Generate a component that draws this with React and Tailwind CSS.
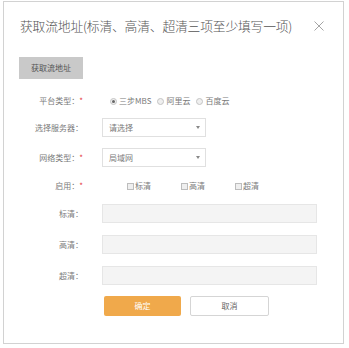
import React, { useState } from 'react';

const font = { fontFamily: '"Noto Sans CJK SC", "Noto Sans", sans-serif' };

function Radio({ checked, label, onClick }) {
  return (
    <label className="flex items-center cursor-pointer" onClick={onClick}>
      <span className="w-[7px] h-[7px] rounded-full border border-[#c4c4c4] bg-[#efefef] flex items-center justify-center">
        {checked ? <span className="w-[3px] h-[3px] rounded-full bg-[#666]" /> : null}
      </span>
      <span className="ml-[2px]">{label}</span>
    </label>
  );
}

function Check({ label, checked, onClick }) {
  return (
    <label className="flex items-center cursor-pointer w-[54px]" onClick={onClick}>
      <span className="w-[7px] h-[7px] border border-[#bdbdbd] bg-[#efefef] flex items-center justify-center text-[6px] leading-none">
        {checked ? '✓' : ''}
      </span>
      <span className="ml-[1px]">{label}</span>
    </label>
  );
}

function Label({ children, required }) {
  return (
    <div className="w-[81px] text-right pr-[2px] shrink-0">
      {children}
      {required ? <span className="text-[#e4393c]">*</span> : null}
    </div>
  );
}

function Select({ value }) {
  return (
    <div className="ml-[17px] w-[104px] h-[19px] border border-[#e0e0e0] bg-white flex items-center justify-between pl-[6px] pr-[5px]">
      <span>{value}</span>
      <svg width="4" height="3" viewBox="0 0 4 3">
        <path d="M0 0 L4 0 L2 3 Z" fill="#888" />
      </svg>
    </div>
  );
}

function Field({ label }) {
  return (
    <div className="flex items-center h-[19px]">
      <Label>{label}</Label>
      <div className="ml-[17px] w-[215px] h-[19px] border border-[#e6e6e6] bg-[#f4f4f4]" />
    </div>
  );
}

export default function App() {
  const [platform, setPlatform] = useState(0);
  const [enabled, setEnabled] = useState([false, false, false]);

  const toggle = (i) => setEnabled((prev) => prev.map((v, j) => (j === i ? !v : v)));

  return (
    <div className="w-[349px] h-[348px] bg-white" style={font}>
      <div className="ml-[3px] mt-[1px] w-[341px] h-[343px] border border-[#d2d2d2] text-[8px] text-[#7a7a7a]">
        <div className="flex items-center justify-between h-[46px] pl-[16px] pr-[19px] pt-[1px]">
          <div className="text-[12.8px] font-light text-[#555] tracking-[-0.2px]">获取流地址(标清、高清、超清三项至少填写一项)</div>
          <svg width="10" height="10" viewBox="0 0 10 10" className="mt-[1px]">
            <path d="M0.5 0.5 L9.5 9.5 M9.5 0.5 L0.5 9.5" stroke="#a5a5a5" strokeWidth="1" />
          </svg>
        </div>

        <div className="ml-[15px] mt-[9px] w-[64px] h-[22px] bg-[#c9c9c9] text-[#555] flex items-center justify-center">
          获取流地址
        </div>

        <div className="mt-[12px] flex items-center h-[20px]">
          <Label required>平台类型：</Label>
          <div className="ml-[25px] flex items-center gap-[6px]">
            {['三步MBS', '阿里云', '百度云'].map((t, i) => (
              <Radio key={t} label={t} checked={platform === i} onClick={() => setPlatform(i)} />
            ))}
          </div>
        </div>

        <div className="mt-[7px] flex items-center h-[19px]">
          <Label>选择服务器：</Label>
          <Select value="请选择" />
        </div>

        <div className="mt-[11px] flex items-center h-[19px]">
          <Label required>网络类型：</Label>
          <Select value="局域网" />
        </div>

        <div className="mt-[10px] flex items-center h-[18px]">
          <Label required>启用：</Label>
          <div className="ml-[42px] flex items-center">
            {['标清', '高清', '超清'].map((t, i) => (
              <Check key={t} label={t} checked={enabled[i]} onClick={() => toggle(i)} />
            ))}
          </div>
        </div>

        <div className="mt-[9px] flex flex-col gap-[12px]">
          <Field label="标清：" />
          <Field label="高清：" />
          <Field label="超清：" />
        </div>

        <div className="mt-[11px] ml-[100px] flex gap-[9px]">
          <button className="w-[77px] h-[20px] bg-[#f0a94b] text-white rounded-[2px]">确定</button>
          <button className="w-[79px] h-[20px] bg-white border border-[#d5d5d5] text-[#666] rounded-[2px]">取消</button>
        </div>
      </div>
    </div>
  );
}
